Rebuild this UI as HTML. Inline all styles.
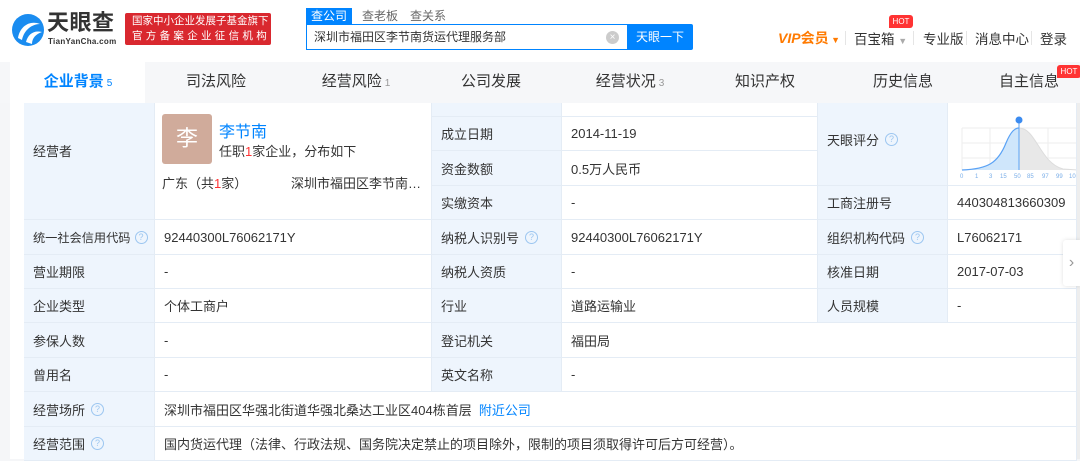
<!DOCTYPE html>
<html><head><meta charset="utf-8"><style>
*{margin:0;padding:0;box-sizing:border-box}
body{width:1080px;height:459px;overflow:hidden;background:#f5f6f8;font-family:"Liberation Sans","Noto Sans CJK SC",sans-serif;color:#333;font-size:13px;position:relative}
.a{position:absolute;white-space:nowrap}
.hdr{left:0;top:0;width:1080px;height:62px;background:#fff;box-shadow:0 1px 4px rgba(0,0,0,.06)}
.tabs{left:0;top:62px;width:1080px;height:41px;background:#f6f7f9}
.tab{position:absolute;top:62px;width:140px;height:41px;line-height:40px;font-size:15px;color:#333;text-align:center;white-space:nowrap}
.tab sup{font-size:10px;color:#999;vertical-align:0;margin-left:3px}
.c{position:absolute;border-bottom:1px solid #e4ecf5;border-right:1px solid #e4ecf5;padding-left:9px;display:flex;align-items:center;font-size:13px;white-space:nowrap}
.l{background:#eef5fd}
.v{background:#fff}
.q{display:inline-block;width:13px;height:13px;border:1px solid #9cc6f0;border-radius:50%;color:#9cc6f0;font-size:9px;line-height:11px;text-align:center;margin-left:6px}
.nv{font-size:13.5px;color:#333;top:28px}
.sp{top:31px;width:1px;height:14px;background:#e5e5e5}
</style></head><body>
<div class="a hdr"></div>
<svg class="a" style="left:10px;top:12px" width="36" height="36" viewBox="0 0 36 36"><circle cx="18" cy="18" r="16" fill="#1a8cf0"/><path d="M8 26 C10 14 20 8 30 12 C22 12 14 18 12 28Z" fill="#fff"/><path d="M16 30 C18 22 24 18 32 20 C26 22 22 26 22 32Z" fill="#fff"/></svg>
<div class="a" style="left:47px;top:10px;font-size:22px;line-height:26px;font-weight:bold;color:#333;letter-spacing:0.5px">天眼查</div>
<div class="a" style="left:48px;top:37px;font-size:8px;color:#333;font-weight:bold;letter-spacing:0.3px">TianYanCha.com</div>
<div class="a" style="left:125px;top:13px;width:146px;height:32px;background:#d9282f;border-radius:2px;color:#fff;font-size:10.5px;line-height:15px;padding:1px 0 0 7px">国家中小企业发展子基金旗下<br><span style="letter-spacing:3.3px">官方备案企业征信机构</span></div>
<div class="a" style="left:306px;top:8px;width:46px;height:16px;background:#0084ff;color:#fff;font-size:12px;line-height:16px;text-align:center">查公司</div>
<div class="a" style="left:362px;top:8px;font-size:12px;color:#666;line-height:16px">查老板</div>
<div class="a" style="left:410px;top:8px;font-size:12px;color:#666;line-height:16px">查关系</div>
<div class="a" style="left:306px;top:24px;width:322px;height:26px;border:1px solid #0084ff;border-right:none;background:#fff;padding-left:7px;line-height:24px;font-size:12px">深圳市福田区李节南货运代理服务部</div>
<div class="a" style="left:606px;top:31px;width:13px;height:13px;border-radius:50%;background:#ccc;color:#fff;font-size:10px;line-height:13px;text-align:center">×</div>
<div class="a" style="left:627px;top:24px;width:66px;height:26px;background:#0084ff;color:#fff;font-size:12px;line-height:26px;text-align:center;border-radius:0 2px 2px 0">天眼一下</div>
<div class="a" style="left:778px;top:28px;font-size:14px;font-weight:bold;color:#ff7a00"><i>VIP</i>会员<span style="font-size:9px"> ▼</span></div>
<div class="a sp" style="left:845px"></div>
<div class="a nv" style="left:854px">百宝箱 <span style="font-size:9px;color:#aaa">▼</span></div>
<div class="a" style="left:889px;top:15px;width:24px;height:13px;background:#f33;color:#fff;font-size:8px;line-height:13px;text-align:center;border-radius:3px 3px 3px 0">HOT</div>
<div class="a sp" style="left:913px"></div>
<div class="a nv" style="left:923px">专业版</div>
<div class="a sp" style="left:966px"></div>
<div class="a nv" style="left:975px">消息中心</div>
<div class="a sp" style="left:1031px"></div>
<div class="a nv" style="left:1040px">登录</div>

<div class="a tabs"></div>
<div class="a" style="left:10px;top:62px;width:135px;height:41px;background:#fff"></div>
<div class="tab" style="left:8px;color:#0084ff;font-weight:bold">企业背景<sup style="color:#0084ff;font-weight:normal">5</sup></div>
<div class="tab" style="left:146px">司法风险</div>
<div class="tab" style="left:286px">经营风险<sup>1</sup></div>
<div class="tab" style="left:421px">公司发展</div>
<div class="tab" style="left:560px">经营状况<sup>3</sup></div>
<div class="tab" style="left:695px">知识产权</div>
<div class="tab" style="left:833px">历史信息</div>
<div class="tab" style="left:959px">自主信息</div>
<div class="a" style="left:1057px;top:65px;width:24px;height:13px;background:#f33;color:#fff;font-size:8px;line-height:13px;text-align:center;border-radius:3px 3px 3px 0">HOT</div>

<div class="a" style="left:10px;top:103px;width:1067px;height:356px;background:#fff"></div>
<div class="c l" style="left:24px;top:103px;width:131px;height:117px;padding-bottom:22px">经营者</div>
<div class="c v" style="left:155px;top:103px;width:277px;height:117px;display:block">
 <div class="a" style="left:7px;top:11px;width:50px;height:50px;background:#d0ab9b;border-radius:3px;color:#fff;font-size:22px;line-height:50px;text-align:center">李</div>
 <div class="a" style="left:64px;top:15px;font-size:16px;color:#0084ff">李节南</div>
 <div class="a" style="left:64px;top:38px;font-size:13px">任职<span style="color:#f33">1</span>家企业，分布如下</div>
 <div class="a" style="left:7px;top:70px;font-size:13px">广东（共<span style="color:#f33">1</span>家）</div>
 <div class="a" style="left:136px;top:70px;font-size:13px">深圳市福田区李节南…</div>
</div>
<div class="c l" style="left:432px;top:103px;width:130px;height:14px"></div>
<div class="c v" style="left:562px;top:103px;width:256px;height:14px"></div>
<div class="c l" style="left:432px;top:117px;width:130px;height:34px">成立日期</div>
<div class="c v" style="left:562px;top:117px;width:256px;height:34px">2014-11-19</div>
<div class="c l" style="left:432px;top:151px;width:130px;height:35px">资金数额</div>
<div class="c v" style="left:562px;top:151px;width:256px;height:35px">0.5万人民币</div>
<div class="c l" style="left:432px;top:186px;width:130px;height:34px">实缴资本</div>
<div class="c v" style="left:562px;top:186px;width:256px;height:34px">-</div>
<div class="c l" style="left:818px;top:103px;width:130px;height:83px;padding-bottom:10px">天眼评分<span class="q">?</span></div>
<div class="c v" style="left:948px;top:103px;width:129px;height:83px;padding:0;display:block;overflow:hidden">
<svg width="129" height="83" viewBox="0 0 129 83">
 <g stroke="#eee" stroke-width="1"><line x1="14" y1="25" x2="129" y2="25"/><line x1="14" y1="40" x2="129" y2="40"/><line x1="14" y1="55" x2="129" y2="55"/><line x1="14" y1="25" x2="14" y2="67"/><line x1="42" y1="25" x2="42" y2="67"/><line x1="100" y1="25" x2="100" y2="67"/></g>
 <path d="M71 25 C88 25 92 60 115 66 L129 67 L71 67Z" fill="#e8e8e8"/>
 <path d="M14 67 C40 66 50 60 58 40 C63 28 67 25 71 25 L71 67Z" fill="#cfe6fb"/>
 <path d="M14 67 C40 66 50 60 58 40 C63 28 67 25 71 25" stroke="#5aa2f5" fill="none" stroke-width="1.2"/>
 <path d="M71 25 C88 25 92 60 115 66 L129 67" stroke="#ddd" fill="none"/>
 <line x1="71" y1="20" x2="71" y2="67" stroke="#5aa2f5"/>
 <circle cx="71" cy="17" r="3.5" fill="#3b8bf0"/>
 <g font-size="6" fill="#7aaee8" font-family="Liberation Sans"><text x="12" y="75">0</text><text x="27" y="75">1</text><text x="41" y="75">3</text><text x="52" y="75">15</text><text x="66" y="75">50</text><text x="79" y="75">85</text><text x="94" y="75">97</text><text x="108" y="75">99</text><text x="121" y="75">10</text></g>
</svg></div>
<div class="c l" style="left:818px;top:186px;width:130px;height:34px">工商注册号</div>
<div class="c v" style="left:948px;top:186px;width:129px;height:34px">440304813660309</div>

<div class="c l" style="left:24px;top:220px;width:131px;height:35px;overflow:hidden"><span style="font-size:12.2px">统一社会信用代码</span><span class="q" style="margin-left:4px">?</span></div>
<div class="c v" style="left:155px;top:220px;width:277px;height:35px">92440300L76062171Y</div>
<div class="c l" style="left:432px;top:220px;width:130px;height:35px">纳税人识别号<span class="q">?</span></div>
<div class="c v" style="left:562px;top:220px;width:256px;height:35px">92440300L76062171Y</div>
<div class="c l" style="left:818px;top:220px;width:130px;height:35px">组织机构代码<span class="q">?</span></div>
<div class="c v" style="left:948px;top:220px;width:129px;height:35px">L76062171</div>

<div class="c l" style="left:24px;top:255px;width:131px;height:34px">营业期限</div>
<div class="c v" style="left:155px;top:255px;width:277px;height:34px">-</div>
<div class="c l" style="left:432px;top:255px;width:130px;height:34px">纳税人资质</div>
<div class="c v" style="left:562px;top:255px;width:256px;height:34px">-</div>
<div class="c l" style="left:818px;top:255px;width:130px;height:34px">核准日期</div>
<div class="c v" style="left:948px;top:255px;width:129px;height:34px">2017-07-03</div>

<div class="c l" style="left:24px;top:289px;width:131px;height:34px">企业类型</div>
<div class="c v" style="left:155px;top:289px;width:277px;height:34px">个体工商户</div>
<div class="c l" style="left:432px;top:289px;width:130px;height:34px">行业</div>
<div class="c v" style="left:562px;top:289px;width:256px;height:34px">道路运输业</div>
<div class="c l" style="left:818px;top:289px;width:130px;height:34px">人员规模</div>
<div class="c v" style="left:948px;top:289px;width:129px;height:34px">-</div>

<div class="c l" style="left:24px;top:323px;width:131px;height:35px">参保人数</div>
<div class="c v" style="left:155px;top:323px;width:277px;height:35px">-</div>
<div class="c l" style="left:432px;top:323px;width:130px;height:35px">登记机关</div>
<div class="c v" style="left:562px;top:323px;width:515px;height:35px">福田局</div>

<div class="c l" style="left:24px;top:358px;width:131px;height:34px">曾用名</div>
<div class="c v" style="left:155px;top:358px;width:277px;height:34px">-</div>
<div class="c l" style="left:432px;top:358px;width:130px;height:34px">英文名称</div>
<div class="c v" style="left:562px;top:358px;width:515px;height:34px">-</div>

<div class="c l" style="left:24px;top:392px;width:131px;height:35px">经营场所<span class="q">?</span></div>
<div class="c v" style="left:155px;top:392px;width:922px;height:35px">深圳市福田区华强北街道华强北桑达工业区404栋首层&nbsp;&nbsp;<span style="color:#0084ff">附近公司</span></div>
<div class="c l" style="left:24px;top:427px;width:131px;height:34px">经营范围<span class="q">?</span></div>
<div class="c v" style="left:155px;top:427px;width:922px;height:34px">国内货运代理（法律、行政法规、国务院决定禁止的项目除外，限制的项目须取得许可后方可经营）。</div>

<div class="a" style="left:1077px;top:103px;width:3px;height:356px;background:#eee"></div>
<div class="a" style="left:1063px;top:240px;width:17px;height:46px;background:#fff;box-shadow:0 0 4px rgba(0,0,0,.12);border-radius:3px 0 0 3px;color:#999;font-size:16px;line-height:46px;text-align:center">›</div>
</body></html>
